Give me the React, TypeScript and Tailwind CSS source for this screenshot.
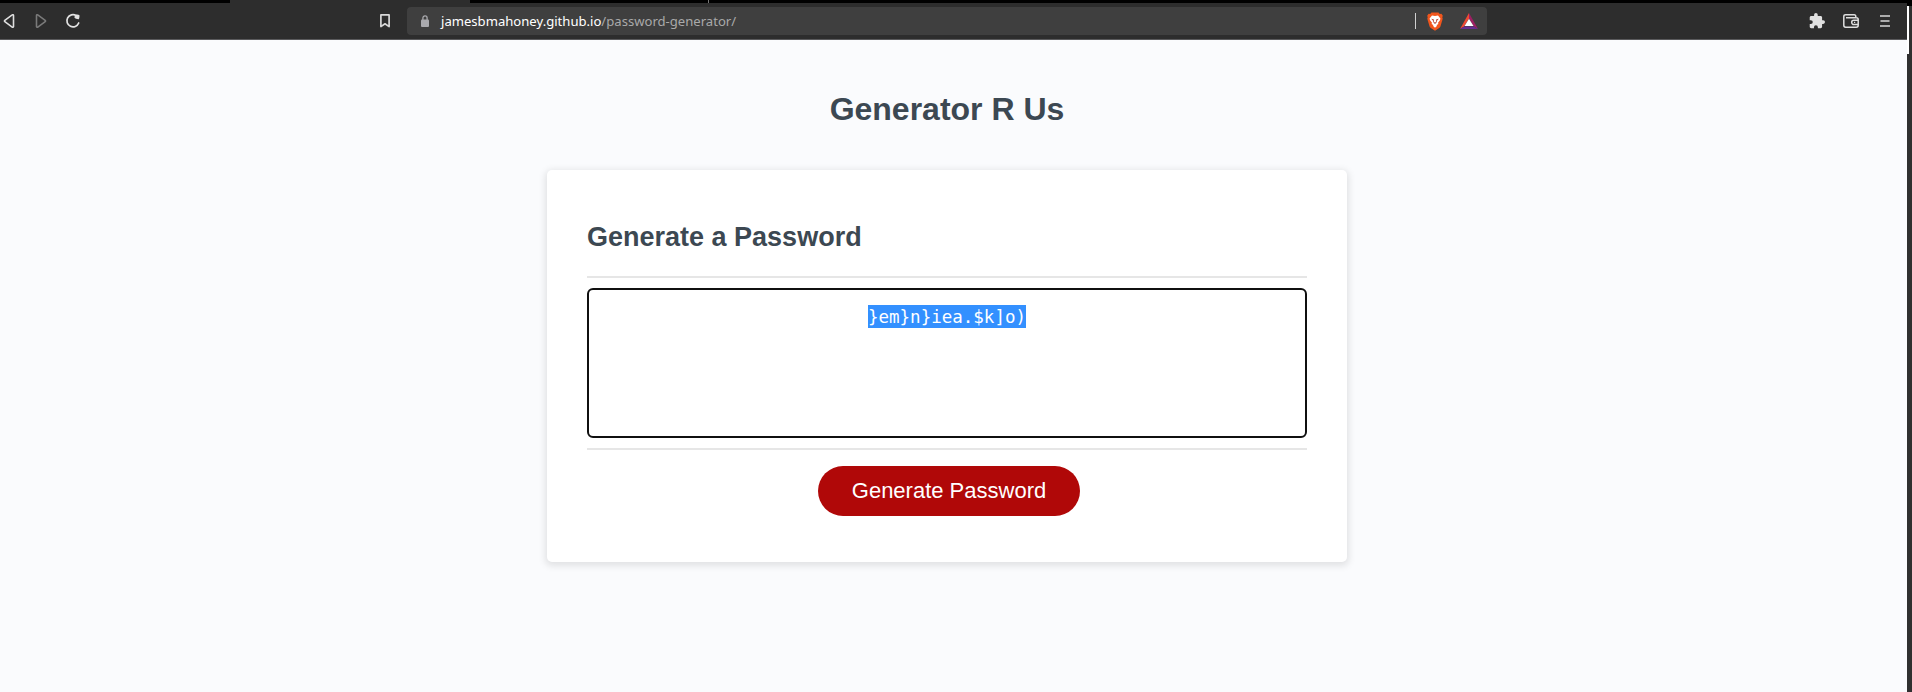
import React from "react";

function BackIcon({ className }: { className: string }) {
  return (
    <svg className={className} viewBox="0 0 12 16" fill="none" stroke="currentColor" strokeWidth="1.6" strokeLinejoin="round">
      <path d="M9.2 1.9 1.8 7.3a.8.8 0 0 0 0 1.3l7.4 5.5c.5.4 1.3 0 1.3-.6V2.5c0-.6-.8-1-1.3-.6Z" />
    </svg>
  );
}

function ReloadIcon() {
  return (
    <svg className="h-4 w-4 text-[#e2e2e2]" viewBox="0 0 16 16" fill="none">
      <path d="M11.2 2.6A6.1 6.1 0 1 0 13.7 10" stroke="currentColor" strokeWidth="1.7" strokeLinecap="round" />
      <path d="M10 1.9c1.6-.6 3.4-.5 4.4.2.2 1.5 0 3-.6 4.1-1.8.1-3.6-.4-4.4-1.6Z" fill="currentColor" />
    </svg>
  );
}

function BookmarkIcon() {
  return (
    <svg className="h-4 w-3" viewBox="0 0 12 16" fill="none" stroke="#d8d8d8" strokeWidth="1.7" strokeLinejoin="round">
      <path d="M1.9 1.9h8.2v11.7L6 10.8l-4.1 2.8Z" />
    </svg>
  );
}

function LockIcon() {
  return (
    <svg className="h-3 w-2" viewBox="0 0 8 12" fill="none">
      <rect y="4.5" width="8" height="7.5" rx="1" fill="#a9a9ad" />
      <path d="M1.9 5V3a2.1 2.1 0 0 1 4.2 0v2" stroke="#a9a9ad" strokeWidth="1.3" />
    </svg>
  );
}

function ShieldLion() {
  return (
    <svg className="h-[19px] w-4" viewBox="0 0 16 19">
      <path d="M4.5.5h7l1.3 1.4 1.6-.2 1.4 2-.5 1.5.4 1.5-2.2 7.6c-.2.8-.7 1.3-1.3 1.7L8 18.7 3.8 16c-.6-.4-1.1-.9-1.3-1.7L.3 6.7l.4-1.5-.5-1.5 1.4-2 1.6.2Z" fill="#f1561d" />
      <path d="M5 3.5 8 4l3-.5 2.4 2.9-.4 1.8-2 2.5.4 1.4-1.7 1 .2 1L8 15.8l-1.9-1.7.2-1-1.7-1 .4-1.4-2-2.5-.4-1.8Z" fill="#fff" />
      <path d="m4.2 6.7 2.5.5.4 2.7L8 10.5l.9-.6.4-2.7 2.5-.5-1.8 2-.6 2.1L8 12l-1.4-1.2L6 8.7Z" fill="#b94a39" />
    </svg>
  );
}

function RewardsTriangle() {
  return (
    <svg className="h-4 w-[18px]" viewBox="0 0 18 16">
      <path d="M9 0 0 16l4-2.6 5-8Z" fill="#f04a32" />
      <path d="m9 0 9 16-4.2-2.6L9 5.4Z" fill="#9e1f63" />
      <path d="M0 16h18l-4.2-2.6H4Z" fill="#662d91" />
      <path d="m9 5.8 4.5 7.3h-9Z" fill="#fff" />
    </svg>
  );
}

function PuzzleIcon() {
  return (
    <svg className="h-4 w-4" viewBox="1 1 22 22" fill="#e0e0e0">
      <path d="M20.5 11H19V7c0-1.1-.9-2-2-2h-4V3.5a2.5 2.5 0 0 0-5 0V5H4c-1.1 0-2 .9-2 2v3.8h1.5a2.7 2.7 0 0 1 0 5.4H2V20c0 1.1.9 2 2 2h3.8v-1.5a2.7 2.7 0 0 1 5.4 0V22H17c1.1 0 2-.9 2-2v-4h1.5a2.5 2.5 0 0 0 0-5Z" />
    </svg>
  );
}

function WalletIcon() {
  return (
    <svg className="h-[14px] w-4" viewBox="0 0 16 14" fill="none" stroke="#dedede" strokeWidth="1.5">
      <path d="M12.8 3.7V2.5c0-1-.6-1.7-1.6-1.7H2.6C1.6.8.8 1.5.8 2.5v8.8c0 1.1.8 1.9 1.8 1.9h10.8c1 0 1.8-.8 1.8-1.9V5.5c0-1-.7-1.8-1.8-1.8H3" />
      <path d="M15.2 6.3h-4.4a2.1 2.1 0 0 0 0 4.2h4.4" />
      <path d="M11 8.4h1.2" strokeWidth="1.2" />
    </svg>
  );
}

function MenuIcon() {
  return (
    <svg className="h-3 w-[10px]" viewBox="0 0 10 12" stroke="#d6d6d6" strokeWidth="1.7">
      <path d="M0 1h10M.5 6h9M0 11h10" />
    </svg>
  );
}

function BrowserBar() {
  return (
    <header className="flex h-10 flex-col border-b border-[#5a5a5c] bg-[#2d2d2d]">
      <div className="flex h-[3px] shrink-0">
        <div className="w-[230px] bg-black" />
        <div className="w-[240px]" />
        <div className="w-[238px] bg-black" />
        <div className="w-px bg-[#777]" />
        <div className="flex-1 bg-black" />
      </div>
      <div className="flex flex-1 items-center pb-1 pt-1">
        <div className="flex w-[407px] shrink-0 items-center pl-[3px]">
          <BackIcon className="h-4 w-3 text-[#dedede]" />
          <BackIcon className="ml-5 h-4 w-3 -scale-x-100 text-[#7a7a7a]" />
          <span className="ml-[18px]"><ReloadIcon /></span>
          <span className="ml-auto mr-[16px]"><BookmarkIcon /></span>
        </div>
        <div className="flex h-7 w-[1080px] shrink-0 items-center rounded bg-[#3f3f3f] pl-[14px] pr-[9px]">
          <LockIcon />
          <p className="ml-3 whitespace-nowrap font-['Noto_Sans','Open_Sans',sans-serif] text-[13.1px] leading-5 text-[#a9a9a9]">
            <span className="text-white">jamesbmahoney.github.io</span>/password-generator/
          </p>
          <div className="ml-auto h-4 w-px bg-[#cfcfcf]" />
          <span className="ml-[11px]"><ShieldLion /></span>
          <span className="ml-[17px]"><RewardsTriangle /></span>
        </div>
        <div className="ml-auto flex items-center pr-[17px]">
          <PuzzleIcon />
          <span className="ml-[18px]"><WalletIcon /></span>
          <span className="ml-[21px]"><MenuIcon /></span>
        </div>
      </div>
    </header>
  );
}

function WindowEdge() {
  return (
    <aside className="flex w-[5px] shrink-0 flex-col bg-[#303030]">
      <div className="h-[6px] bg-black" />
      <div className="h-12 w-0.5 bg-white" />
    </aside>
  );
}

export default function App() {
  return (
    <div className="flex h-[692px] w-[1912px] overflow-hidden bg-[#fafbfd] font-['Liberation_Sans',Arial,sans-serif]">
      <div className="flex min-w-0 flex-1 flex-col">
        <BrowserBar />
        <main className="flex flex-col items-center pr-[13px]">
          <h1 className="mt-[51px] text-[32px] font-bold leading-9 text-[#3c4852]">Generator R Us</h1>
          <section className="mt-[43px] flex h-[392px] w-[800px] flex-col rounded-[5px] bg-white px-10 pt-[51px] shadow-[0_2px_7px_2px_rgba(0,0,0,0.1)]">
            <h2 className="text-[27px] font-bold leading-8 text-[#3c4852]">Generate a Password</h2>
            <div className="mt-[23px] h-0.5 bg-[#e6e6e6]" />
            <div className="mt-[10px] h-[150px] rounded-md border-2 border-[#101010] pt-[15px] text-center">
              <span className="inline-block h-[23px] bg-[#3390ff] align-top font-['DejaVu_Sans_Mono',monospace] text-[17.5px] leading-6 text-white">{"}em}n}iea.$k]o)"}</span>
            </div>
            <div className="mt-[10px] h-0.5 bg-[#e6e6e6]" />
            <button type="button" className="ml-[231px] mt-4 h-[50px] w-[262px] shrink-0 rounded-full bg-[#b00808] pb-0.5 text-[22px] text-white">
              Generate Password
            </button>
          </section>
        </main>
      </div>
      <WindowEdge />
    </div>
  );
}
